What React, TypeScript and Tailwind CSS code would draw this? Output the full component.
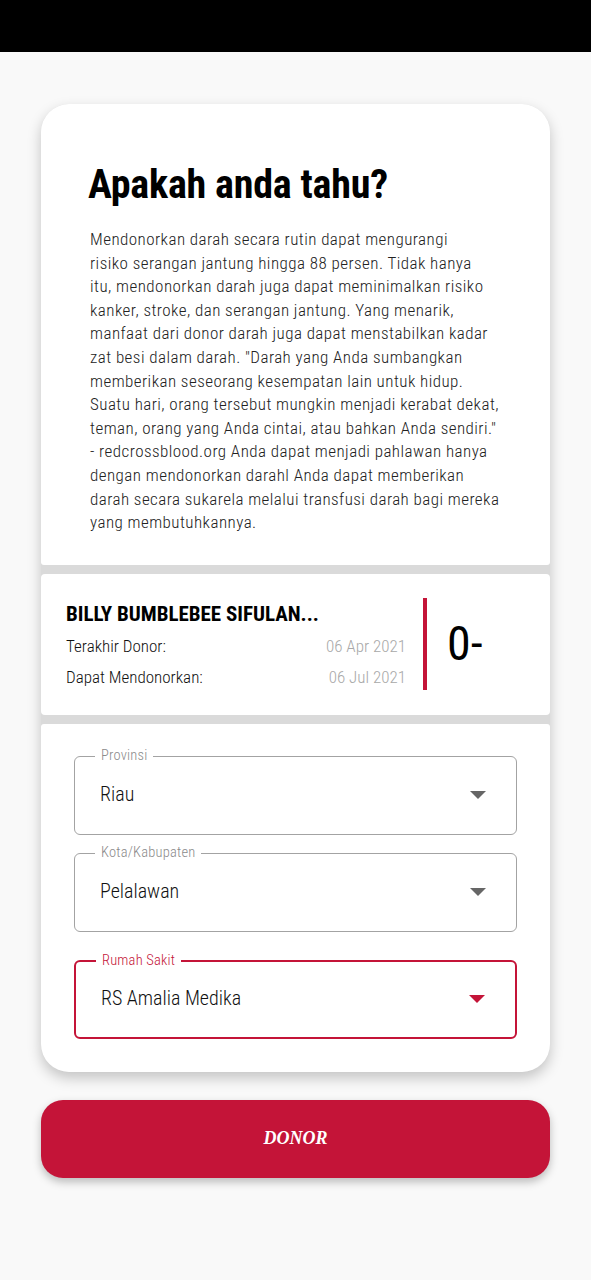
import React from "react";

const lines = [
  "Mendonorkan darah secara rutin dapat mengurangi",
  "risiko serangan jantung hingga 88 persen. Tidak hanya",
  "itu, mendonorkan darah juga dapat meminimalkan risiko",
  "kanker, stroke, dan serangan jantung. Yang menarik,",
  "manfaat dari donor darah juga dapat menstabilkan kadar",
  'zat besi dalam darah. "Darah yang Anda sumbangkan',
  "memberikan seseorang kesempatan lain untuk hidup.",
  "Suatu hari, orang tersebut mungkin menjadi kerabat dekat,",
  'teman, orang yang Anda cintai, atau bahkan Anda sendiri."',
  "- redcrossblood.org Anda dapat menjadi pahlawan hanya",
  "dengan mendonorkan darahl Anda dapat memberikan",
  "darah secara sukarela melalui transfusi darah bagi mereka",
  "yang membutuhkannya.",
];

const font = {
  fontFamily: '"Roboto Condensed", "Liberation Sans Narrow", "DejaVu Sans Condensed", Roboto, sans-serif',
};

type FieldProps = { label: string; value: string; active?: boolean };

const Field = ({ label, value, active }: FieldProps) => {
  return (
    <div
      className={
        active
          ? "relative h-[79px] rounded-[6px] border-2 border-[#c41438] flex items-center pl-[25px] pr-[30px]"
          : "relative h-[79px] rounded-[6px] border-[1.5px] border-[#a3a3a3] flex items-center pl-[25px] pr-[30px]"
      }
    >
      <span
        className={
          active
            ? "absolute -top-[11px] left-[20px] bg-white px-[6px] text-[14.5px] leading-[20px] text-[#c41438] font-light tracking-[0.2px]"
            : "absolute -top-[11px] left-[20px] bg-white px-[6px] text-[14.5px] leading-[20px] text-[#8a8a8a] font-light tracking-[0.2px]"
        }
      >
        {label}
      </span>
      <span className="flex-1 text-[20px] text-[#111] -mt-[2px] font-light">{value}</span>
      <svg width="16" height="8" viewBox="0 0 16 8">
        <path d="M0 0 L16 0 L8 8 Z" fill={active ? "#c41438" : "#666666"} />
      </svg>
    </div>
  );
};

export default function App() {
  return (
    <div className="min-h-[1280px] bg-[#f9f9f9]" style={font}>
      <div className="h-[52px] bg-black" />

      <div className="mx-[41px] mt-[52px] rounded-[28px] bg-[#dadada] shadow-[0_6px_14px_rgba(0,0,0,0.22)] flex flex-col gap-[9px]">
        <div className="bg-white rounded-t-[28px] rounded-b-[3px] pt-[58px] pb-[30px] pl-[47px] pr-[20px]">
          <h1 className="text-[40px] leading-[46px] font-bold text-black tracking-[-0.2px]">
            Apakah anda tahu?
          </h1>
          <div className="mt-[20px] pl-[2px] text-[17px] leading-[23.6px] text-[#222] font-light tracking-[0.45px]">
            {lines.map((l, i) => (
              <div key={i} className="whitespace-nowrap">
                {l}
              </div>
            ))}
          </div>
        </div>

        <div className="bg-white rounded-[4px] h-[141px] flex items-center pl-[25px] pr-[40px]">
          <div className="w-[340px] flex flex-col">
            <div className="text-[21px] leading-[26px] font-bold text-black">BILLY BUMBLEBEE SIFULAN...</div>
            <div className="mt-[8px] flex justify-between text-[17px] leading-[22px]">
              <span className="text-[#111] font-light">Terakhir Donor:</span>
              <span className="text-[#a8a8a8] font-light">06 Apr 2021</span>
            </div>
            <div className="mt-[9px] flex justify-between text-[17px] leading-[22px]">
              <span className="text-[#111] font-light">Dapat Mendonorkan:</span>
              <span className="text-[#a8a8a8] font-light">06 Jul 2021</span>
            </div>
          </div>
          <div className="ml-[17px] w-[4px] h-[92px] bg-[#c41438]" />
          <div className="ml-[20px] text-[48px] leading-[52px] text-black">0-</div>
        </div>

        <div className="bg-white rounded-t-[3px] rounded-b-[28px] pt-[32px] pb-[33px] px-[33px] flex flex-col">
          <Field label="Provinsi" value="Riau" />
          <div className="h-[18px]" />
          <Field label="Kota/Kabupaten" value="Pelalawan" />
          <div className="h-[28px]" />
          <Field label="Rumah Sakit" value="RS Amalia Medika" active />
        </div>
      </div>

      <button className="mx-[41px] mt-[28px] w-[509px] h-[78px] rounded-[22px] bg-[#c41438] shadow-[0_4px_8px_rgba(0,0,0,0.25)] flex items-center justify-center">
        <span
          className="text-white italic font-bold text-[18px]"
          style={{ fontFamily: '"Liberation Serif", "DejaVu Serif", serif' }}
        >
          DONOR
        </span>
      </button>
    </div>
  );
}
